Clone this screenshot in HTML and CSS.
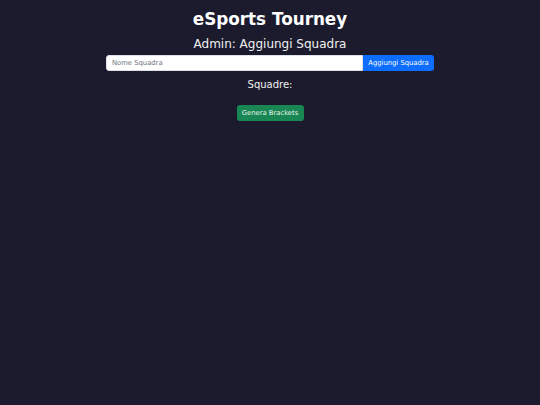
FILE: index.html
```html
<!DOCTYPE html>
<html lang="it">
<head>
<meta charset="utf-8">
<title>eSports Tourney</title>
<link rel="stylesheet" href="styles.css">
</head>
<body>
<main class="app">
  <h1 class="title">eSports Tourney</h1>
  <h2 class="subtitle">Admin: Aggiungi Squadra</h2>
  <form class="add-team">
    <input class="team-input" type="text" placeholder="Nome Squadra">
    <button class="btn btn-primary" type="button">Aggiungi Squadra</button>
  </form>
  <h3 class="teams-title">Squadre:</h3>
  <ul class="team-list"></ul>
  <button class="btn btn-success" type="button">Genera Brackets</button>
</main>
</body>
</html>
```

FILE: styles.css
```css
html, body {
  margin: 0;
  padding: 0;
  background: #1c1b2e;
  height: 100%;
}
body {
  font-family: "DejaVu Sans", Verdana, sans-serif;
  color: #ffffff;
}
.app {
  display: flex;
  flex-direction: column;
  align-items: center;
  padding-top: 8px;
}
.title {
  margin: 0;
  font-size: 16.8px;
  font-weight: bold;
  line-height: 22px;
  height: 22px;
}
.subtitle {
  margin: 6px 0 0;
  font-size: 12px;
  font-weight: normal;
  line-height: 16px;
  color: #f0f0f0;
}
.add-team {
  display: flex;
  width: 328px;
  height: 16px;
  margin-top: 3px;
}
.team-input {
  flex: 1;
  min-width: 0;
  box-sizing: border-box;
  height: 16px;
  border: 1px solid #dee2e6;
  border-radius: 3px 0 0 3px;
  padding: 0 5px;
  font-family: "DejaVu Sans", sans-serif;
  font-size: 6.8px;
  color: #212529;
  background: #fff;
  outline: none;
}
.team-input::placeholder {
  color: #6c757d;
}
.btn {
  box-sizing: border-box;
  border: 0;
  font-family: "DejaVu Sans", sans-serif;
  font-size: 6.8px;
  color: #fff;
  cursor: pointer;
  padding: 0 5px;
}
.btn-primary {
  background: #0d6efd;
  height: 16px;
  border-radius: 0 3px 3px 0;
  width: 71px;
}
.teams-title {
  margin: 7px 0 0;
  font-size: 10px;
  font-weight: normal;
  line-height: 14px;
  color: #f0f0f0;
}
.team-list {
  margin: 0;
  padding: 0;
  list-style: none;
  height: 9px;
}
.btn-success {
  background: #198754;
  height: 16px;
  width: 67px;
  border-radius: 3px;
  color: #e8f3ec;
  margin-top: 4px;
}
```
